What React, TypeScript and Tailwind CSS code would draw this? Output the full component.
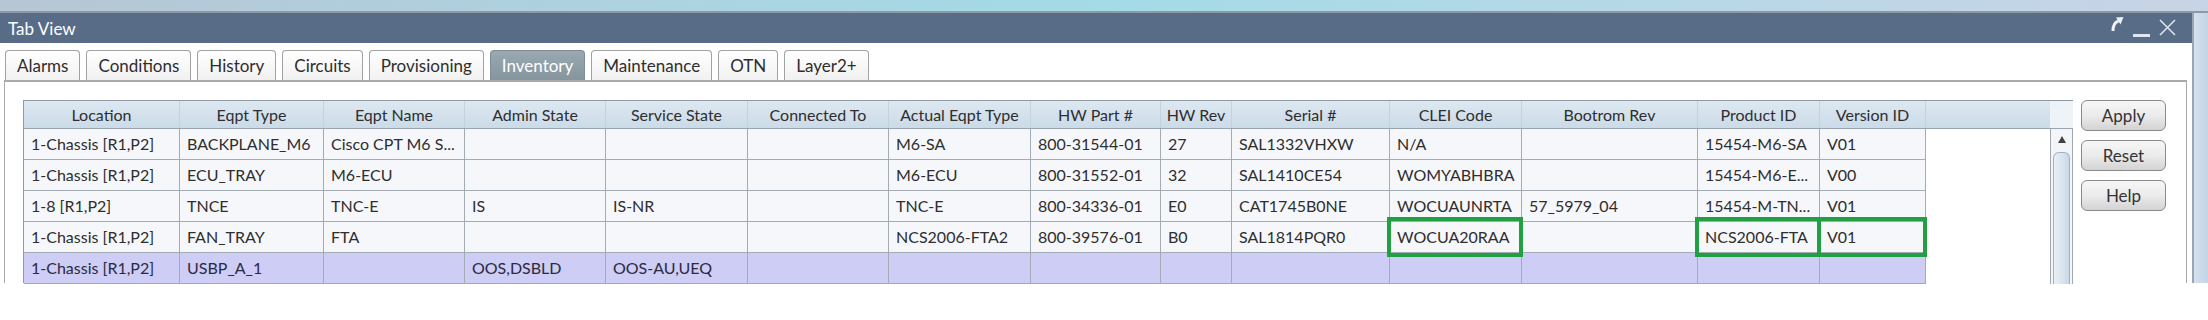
import React from 'react';

const cols = [
  { name: 'Location', w: 'w-[156px]' },
  { name: 'Eqpt Type', w: 'w-[144px]' },
  { name: 'Eqpt Name', w: 'w-[141px]' },
  { name: 'Admin State', w: 'w-[141px]' },
  { name: 'Service State', w: 'w-[142px]' },
  { name: 'Connected To', w: 'w-[141px]' },
  { name: 'Actual Eqpt Type', w: 'w-[142px]' },
  { name: 'HW Part #', w: 'w-[130px]' },
  { name: 'HW Rev', w: 'w-[71px]' },
  { name: 'Serial #', w: 'w-[158px]' },
  { name: 'CLEI Code', w: 'w-[132px]' },
  { name: 'Bootrom Rev', w: 'w-[176px]' },
  { name: 'Product ID', w: 'w-[122px]' },
  { name: 'Version ID', w: 'w-[106px]' },
];

const rows = [
  ['1-Chassis [R1,P2]', 'BACKPLANE_M6', 'Cisco CPT M6 S...', '', '', '', 'M6-SA', '800-31544-01', '27', 'SAL1332VHXW', 'N/A', '', '15454-M6-SA', 'V01'],
  ['1-Chassis [R1,P2]', 'ECU_TRAY', 'M6-ECU', '', '', '', 'M6-ECU', '800-31552-01', '32', 'SAL1410CE54', 'WOMYABHBRA', '', '15454-M6-E...', 'V00'],
  ['1-8 [R1,P2]', 'TNCE', 'TNC-E', 'IS', 'IS-NR', '', 'TNC-E', '800-34336-01', 'E0', 'CAT1745B0NE', 'WOCUAUNRTA', '57_5979_04', '15454-M-TN...', 'V01'],
  ['1-Chassis [R1,P2]', 'FAN_TRAY', 'FTA', '', '', '', 'NCS2006-FTA2', '800-39576-01', 'B0', 'SAL1814PQR0', 'WOCUA20RAA', '', 'NCS2006-FTA', 'V01'],
  ['1-Chassis [R1,P2]', 'USBP_A_1', '', 'OOS,DSBLD', 'OOS-AU,UEQ', '', '', '', '', '', '', '', '', ''],
];

// cells outlined in green on the FAN_TRAY row
const marked = [10, 12, 13];

const tabs = ['Alarms', 'Conditions', 'History', 'Circuits', 'Provisioning', 'Inventory', 'Maintenance', 'OTN', 'Layer2+'];

function Tab({ label, active }: { label: string; active?: boolean }) {
  return (
    <div
      className={
        active
          ? 'h-[30px] px-[11px] flex items-center rounded-t-[4px] border border-b-0 border-[#7f8d95] bg-gradient-to-b from-[#9aa9b1] to-[#84959e] text-white'
          : 'h-[30px] px-[11px] flex items-center rounded-t-[4px] border border-b-0 border-[#a2a2a2] bg-gradient-to-b from-white to-[#f1f1f1] text-[#2e2e2e]'
      }
    >
      <span className="text-[17px] leading-none">{label}</span>
    </div>
  );
}

function Btn({ label }: { label: string }) {
  return (
    <button className="w-[85px] h-[31px] rounded-[6px] border border-[#8a8a8a] bg-gradient-to-b from-[#f7f7f7] via-[#ebebeb] to-[#d3d3d3] text-[17px] text-[#333] flex items-center justify-center">
      {label}
    </button>
  );
}

export default function App() {
  return (
    <div className="w-[2208px] h-[320px] bg-white overflow-hidden font-['Lato','Open_Sans',sans-serif]">
      {/* desktop frame strip */}
      <div className="h-[11px] bg-gradient-to-r from-[#b7c6d6] via-[#a3dbe7] to-[#c8d4e6]" />
      <div className="h-[2px] bg-[#8d99a5]" />

      <div className="flex">
        <div className="w-[2192px]">
          {/* Title bar */}
          <div className="h-[30px] bg-[#586c88] flex items-center justify-between pl-[8px] pr-[16px]">
            <span className="text-white text-[17px] leading-none">Tab View</span>
            <div className="flex items-end gap-[9px]">
              <svg width="14" height="16" viewBox="0 0 14 16" className="mb-[9px]">
                <path d="M3 15 C3 9 5 6 8.5 5" stroke="#eef2f6" strokeWidth="3" fill="none" />
                <path d="M6 1.5 L13.5 1 L10.5 8.5 Z" fill="#eef2f6" />
              </svg>
              <div className="w-[17px] h-[3px] bg-[#dfe6ee] mb-[4px]" />
              <svg width="17" height="17" viewBox="0 0 17 17" className="mb-[5px]">
                <path d="M1 1 L16 16 M16 1 L1 16" stroke="#dfe6ee" strokeWidth="1.5" />
              </svg>
            </div>
          </div>

          {/* Tabs */}
          <div className="pt-[7px] flex gap-[6px] pl-[5px]">
            {tabs.map((t) => (
              <Tab key={t} label={t} active={t === 'Inventory'} />
            ))}
          </div>

          {/* Tab panel */}
          <div className="ml-[4px] w-[2183px] h-[203px] border-t-2 border-l border-r border-[#a9a9a9] pl-[18px] pt-[18px] flex gap-[8px]">
            {/* Table */}
            <div className="w-[2050px] border-l border-t border-[#8f99a3] text-[16px] text-[#2e2e2e]">
              {/* header */}
              <div className="flex h-[28px] bg-gradient-to-b from-[#dde8f1] to-[#cbdbe8] border-b border-[#9aa4ae]">
                {cols.map((c) => (
                  <div key={c.name} className={`${c.w} shrink-0 border-r border-[#c2d2df] flex items-center justify-center`}>
                    {c.name}
                  </div>
                ))}
                <div className="w-[124px] shrink-0" />
                <div className="flex-1 bg-[#eef3f8]" />
              </div>
              {/* body */}
              <div className="flex">
                <div className="flex-1">
                  {rows.map((r, ri) => (
                    <div key={ri} className="flex h-[31px]">
                      {r.map((v, ci) => (
                        <div
                          key={ci}
                          className={`${cols[ci].w} shrink-0 relative border-r border-b border-[#a3abb3] flex items-center pl-[7px] whitespace-nowrap overflow-visible ${
                            ri === 4 ? 'bg-[#cdcdf6] text-[#2a2a40]' : 'bg-[#f6f7fb]'
                          }`}
                        >
                          {v}
                          {ri === 3 && marked.includes(ci) && (
                            <div className="absolute z-10 -top-[5px] -bottom-[5px] -left-[3px] -right-[2px] border-[4px] border-[#21a043]" />
                          )}
                        </div>
                      ))}
                      <div className="flex-1 bg-white" />
                    </div>
                  ))}
                </div>
                {/* scrollbar */}
                <div className="w-[23px] h-[155px] border-l border-r border-[#a0a8b0] bg-[#f3f5f8] flex flex-col items-center pt-[7px]">
                  <svg width="8" height="7" viewBox="0 0 8 7">
                    <path d="M4 0 L8 7 L0 7 Z" fill="#404040" />
                  </svg>
                  <div className="mt-[9px] w-[17px] flex-1 rounded-t-[6px] border border-b-0 border-[#9fb0c0] bg-gradient-to-r from-[#e9f0f6] via-[#dbe6ef] to-[#c9d8e6]" />
                </div>
              </div>
            </div>

            {/* Buttons */}
            <div className="flex flex-col gap-[9px]">
              <Btn label="Apply" />
              <Btn label="Reset" />
              <Btn label="Help" />
            </div>
          </div>
        </div>

        {/* right frame strip */}
        <div className="w-[16px] h-[270px] border-l-2 border-[#9aa6b2] bg-gradient-to-r from-[#d5e0ee] to-[#c4d4e8]" />
      </div>
    </div>
  );
}
